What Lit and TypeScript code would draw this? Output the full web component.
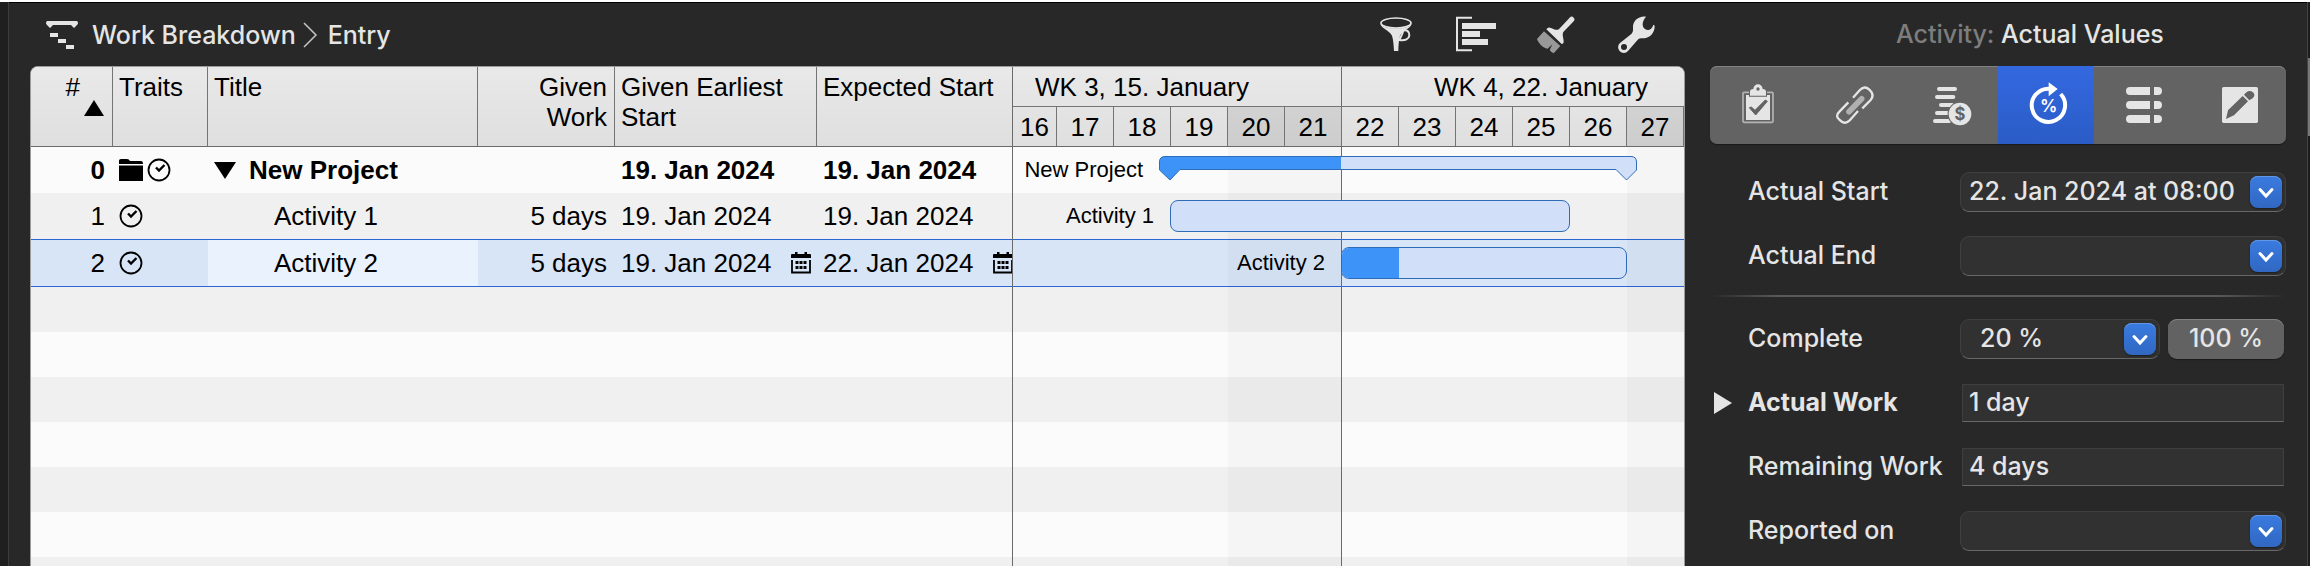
import { LitElement, html, svg, css, nothing } from "lit";
import { customElement } from "lit/decorators.js";
import { classMap } from "lit/directives/class-map.js";

const DAY = 57;
const FIRST_DAY = 16;
const CLIPPED = 14;
const dayX = (day: number) => (day - FIRST_DAY) * DAY - CLIPPED;

interface Row {
  id: number;
  title: string;
  group?: boolean;
  selected?: boolean;
  work: string;
  earliest: string;
  expected: string;
}

const rows: Row[] = [
  { id: 0, title: "New Project", group: true, work: "", earliest: "19. Jan 2024", expected: "19. Jan 2024" },
  { id: 1, title: "Activity 1", work: "5 days", earliest: "19. Jan 2024", expected: "19. Jan 2024" },
  { id: 2, title: "Activity 2", selected: true, work: "5 days", earliest: "19. Jan 2024", expected: "22. Jan 2024" },
];

const days = [16, 17, 18, 19, 20, 21, 22, 23, 24, 25, 26, 27];
const weekend = new Set([20, 21, 27]);

const toolIcons = [
  {
    name: "Filter",
    art: svg`<ellipse cx="60" cy="24" rx="45" ry="15" fill="none" stroke="currentColor" stroke-width="5"/>
      <path d="M13 27C16 40 40 46 48 62C52 74 53 90 54 108H67C67 90 69 74 72 62C80 46 104 40 107 27C98 38 80 40 60 40S22 38 13 27Z" fill="currentColor"/>
      <path d="M82 47C92 43 101 50 100 61S88 78 70 75L78 58Z" fill="none" stroke="currentColor" stroke-width="6"/>`,
  },
  {
    name: "Outline",
    art: svg`<path d="M48 8.500H3V105.500H48" fill="none" stroke="currentColor" stroke-width="6"/>
      <path d="M18 24h102v18H18zM18 48h54v18H18zM18 72h78v18H18z" fill="currentColor"/>`,
  },
  {
    name: "Format",
    art: svg`<path d="M101 8a8 8 0 0 1 12 11L84 49C76 57 83 68 83 80Q83 87 77 87L31 43Q36 36 42 38C52 41 62 49 70 41Z" fill="currentColor"/>
      <path d="M24 49 3 72C8 86 20 98 35 101L49 88 41 105Q46 113 53 115L73 93Z" fill="#999"/>`,
  },
  {
    name: "Tools",
    art: svg`<path fill-rule="evenodd" d="M90 5C68 2 49 18 51 40C52 48 50 53 46 57L12 84A17 17 0 1 0 36 108L64 76C67 72 71 69 77 70C99 71 117 55 116 32L112 29C107 46 95 48 86 41C77 33 78 20 90 5ZM24 87a9 9 0 1 1 0 18a9 9 0 0 1 0-18Z" fill="currentColor"/>`,
  },
];

const tabs = [
  {
    name: "Plan",
    art: svg`<rect x="27" y="34" width="90" height="90" rx="3" fill="none" stroke="#b4b4b4" stroke-width="5"/>
      <path d="M36 42h72v75H36z" fill="currentColor"/>
      <path d="M48 44V32q0-7 10-8a14 14 0 0 1 28 0q10 1 10 8v12z" fill="currentColor" stroke="#636363" stroke-width="6" paint-order="stroke"/>
      <circle cx="72" cy="24" r="5" fill="#636363"/>
      <path d="M46 80 65 102 100 61 94 57 63 88 52 78Z" fill="#636363" stroke="#636363" stroke-width="3"/>`,
  },
  {
    name: "Dependencies",
    art: svg`<path d="M57 92 95 53" stroke="#b0b0b0" stroke-width="17" stroke-linecap="round"/>
      <path d="M69 50 89 28Q103 12 118 26Q135 42 122 57L97 82M55 64 29 91Q14 105 28 116Q44 133 58 119L84 90" fill="none" stroke="currentColor" stroke-width="7"/>`,
  },
  {
    name: "Finances",
    art: svg`<path d="M39 24H87M33 48H82M45 72H78M33 96H66M27 120H70" stroke="currentColor" stroke-width="12" stroke-linecap="round"/>
      <circle cx="102" cy="99" r="34" fill="currentColor" stroke="#636363" stroke-width="6" paint-order="stroke"/>
      <text x="102" y="117" text-anchor="middle" font-size="50" font-weight="700" fill="#636363">$</text>`,
  },
  {
    name: "Actual Values",
    active: true,
    art: svg`<path d="M116 39A50 50 0 1 1 82 23" fill="none" stroke="currentColor" stroke-width="12"/>
      <path d="M80 4V46L107 24Z" fill="currentColor"/>
      <text x="80" y="92" text-anchor="middle" font-size="52" font-weight="600" fill="currentColor">%</text>`,
  },
  {
    name: "Fields",
    art: svg`${[18, 60, 102].map(
      (y) => svg`<path d="M36 ${y}H96v24H36a12 12 0 0 1 0-24ZM108 ${y}h12a12 12 0 0 1 0 24h-12Z" fill="currentColor"/>`
    )}`,
  },
  {
    name: "Notes",
    art: svg`<rect x="24" y="18" width="108" height="108" rx="5" fill="currentColor"/>
      <path d="M36 114 42 88 86 45 102 61 60 103ZM90 41 98 33Q108 26 117 34T116 52L106 58Z" fill="#636363"/>`,
  },
];

const clock = html`<svg class="trait" viewBox="0 0 24 24" aria-label="Scheduled">
  <circle cx="12" cy="12" r="10.500" fill="none" stroke="#000" stroke-width="1.800"/>
  <path d="M9 9.500 12 12.500 17.500 7" fill="none" stroke="#000" stroke-width="2.400"/>
</svg>`;

const folder = html`<svg class="trait" viewBox="0 0 24 24" aria-label="Group">
  <path d="M0 7.500H24V23H0ZM0 2.500Q0 1 2 1H8Q10 1 11 3H22Q24 3 24 6H0Z"/>
</svg>`;

const calendar = html`<svg class="calendar" viewBox="0 0 20 22" aria-label="Calendar">
  <path d="M1 8V20.500H19V8" fill="none" stroke="#000" stroke-width="1.800"/>
  <path d="M0 3Q0 2 1 2H4V0H6.500V2H13.500V0H16V2H19Q20 2 20 3V6H0ZM4.500 9h3v3h-3zM8.500 9h3v3h-3zM12.500 9h3v3h-3zM4.500 14h3v3h-3zM8.500 14h3v3h-3zM12.500 14h3v3h-3z"/>
</svg>`;

@customElement("work-toolbar")
export class WorkToolbar extends LitElement {
  static styles = css`
    :host { display: flex; align-items: center; height: 63px; padding: 0 29px 0 16px; box-sizing: border-box; }
    .mark { width: 32px; height: 30px; margin-right: 14px; }
    .crumbs { display: flex; align-items: center; flex: 1; color: #e5e5e5; }
    .crumb { color: inherit; text-decoration: none; }
    .sep { width: 16px; height: 28px; margin: 0 10px 0 6px; }
    .tools { display: flex; gap: 40px; }
    .tool { width: 40px; height: 40px; padding: 0; border: 0; background: none; color: #e5e5e5; }
    .tool svg { display: block; width: 40px; height: 40px; overflow: visible; }
  `;

  render() {
    return html`
      <nav class="crumbs" aria-label="Location">
        <svg class="mark" viewBox="0 0 32 30" fill="#e5e5e5" aria-hidden="true">
          <path d="M1 1H31Q33 3 31 5L28 8 25 5H7L4 8 1 5Q-1 3 1 1ZM4 13h8v4H4zM12 19h8v4h-8zM20 25h8v4h-8z"/>
        </svg>
        <a class="crumb" href="#work">Work Breakdown</a>
        <svg class="sep" viewBox="0 0 16 28" aria-hidden="true">
          <path d="M2 2 14 14 2 26" fill="none" stroke="#c4c4c4" stroke-width="1.500"/>
        </svg>
        <a class="crumb" href="#entry">Entry</a>
      </nav>
      <div class="tools">
        ${toolIcons.map(
          (t) => html`<button class="tool" aria-label=${t.name}><svg viewBox="0 0 120 120">${t.art}</svg></button>`
        )}
      </div>
    `;
  }
}

@customElement("outline-table")
export class OutlineTable extends LitElement {
  static styles = css`
    :host {
      display: block; flex: none; box-sizing: border-box; border-right: 1px solid #6a6a6a;
      background: linear-gradient(#f0f0f0 50%, #fbfbfb 50%) 0 220px / 100% 90px;
    }
    .outline { border-collapse: separate; border-spacing: 0; table-layout: fixed; width: 981px; }
    .num { width: 82px; } .traits { width: 95px; } .title { width: 270px; }
    .work { width: 137px; } .earliest { width: 202px; } .expected { width: 195px; }
    th {
      height: 80px; padding: 5px 7px 0 6px; box-sizing: border-box; vertical-align: top; text-align: left;
      font-weight: 400; line-height: 30px; border-right: 1px solid #747474; border-bottom: 1px solid #6a6a6a;
      background: linear-gradient(#e9e9e9, #dfdfdf);
    }
    th:last-child { border-right: 0; }
    .head-num { padding-right: 8px; text-align: right; }
    .hash { display: block; margin-right: 24px; }
    .sort { display: block; width: 20px; height: 16px; margin: -2px 0 0 auto; }
    td { height: 46px; padding: 0 8px 0 6px; box-sizing: border-box; line-height: 30px; white-space: nowrap; overflow: hidden; background: #fbfbfb; }
    .odd td { background: #f0f0f0; }
    .group td { font-weight: 700; }
    .selected td { height: 48px; background: #d8e5f6; border-top: 1px solid #2b66d4; border-bottom: 1px solid #2b66d4; }
    .selected .name { background: #eaf2fd; }
    .right { text-align: right; }
    .icons { display: flex; gap: 4px; }
    .trait { width: 24px; height: 24px; }
    .label { display: flex; align-items: center; gap: 13px; padding-left: 60px; }
    .group .label { padding-left: 0; }
    .toggle { width: 22px; height: 18px; padding: 0; border: 0; background: none; }
    .toggle svg { display: block; }
    .date { display: flex; align-items: center; gap: 20px; }
    .calendar { flex: none; width: 20px; height: 22px; }
  `;

  render() {
    return html`
      <table class="outline">
        <colgroup>
          <col class="num"><col class="traits"><col class="title"><col class="work"><col class="earliest"><col class="expected">
        </colgroup>
        <thead>
          <tr>
            <th class="head-num"><span class="hash">#</span>
              <svg class="sort" viewBox="0 0 20 16" aria-hidden="true"><path d="M10 0 20 16H0Z"/></svg></th>
            <th>Traits</th>
            <th>Title</th>
            <th class="right">Given<br>Work</th>
            <th>Given Earliest Start</th>
            <th>Expected Start</th>
          </tr>
        </thead>
        <tbody>
          ${rows.map(
            (r) => html`<tr class=${classMap({ group: !!r.group, odd: r.id % 2 === 1, selected: !!r.selected })}>
              <td class="right">${r.id}</td>
              <td><div class="icons">${r.group ? folder : nothing}${clock}</div></td>
              <td class="name"><div class="label">
                ${r.group
                  ? html`<button class="toggle" aria-label="Collapse"><svg width="22" height="18" viewBox="0 0 22 18"><path d="M0 1H22L11 18Z"/></svg></button>`
                  : nothing}<span>${r.title}</span></div></td>
              <td class="right">${r.work}</td>
              <td><div class="date">${r.earliest}${r.selected ? calendar : nothing}</div></td>
              <td><div class="date">${r.expected}${r.selected ? calendar : nothing}</div></td>
            </tr>`
          )}
        </tbody>
      </table>
    `;
  }
}

@customElement("gantt-chart")
export class GanttChart extends LitElement {
  static styles = css`
    :host {
      display: flex; flex-direction: column; flex: 1; min-width: 0; overflow: hidden; font-size: 22px;
      background: linear-gradient(#f0f0f0 50%, #fbfbfb 50%) 0 220px / 100% 90px;
    }
    .scale { height: 80px; box-sizing: border-box; font-size: 26px; overflow: hidden; background: linear-gradient(#e9e9e9, #dfdfdf); border-bottom: 1px solid #6a6a6a; }
    .weeks { display: flex; height: 40px; box-sizing: border-box; margin-left: -70px; border-bottom: 1px solid #747474; }
    .week { flex: none; width: 399px; box-sizing: border-box; border-right: 1px solid #6a6a6a; padding-top: 5px; line-height: 30px; text-align: center; }
    .days { display: flex; height: 39px; }
    .day { flex: none; width: 57px; box-sizing: border-box; border-right: 1px solid #747474; line-height: 40px; text-align: center; }
    .day:first-child { width: 44px; }
    .off { background: rgba(0, 0, 0, 0.08); }
    .body { position: relative; flex: 1; }
    .band { height: 46px; background: #fbfbfb; }
    .band.odd { background: #f0f0f0; }
    .band.selected { height: 48px; box-sizing: border-box; background: #d8e5f6; border: solid #2b66d4; border-width: 1px 0; }
    .columns { position: absolute; inset: 0; display: flex; }
    .column { flex: none; width: 57px; box-sizing: border-box; }
    .column:first-child { width: 44px; }
    .column.off { background: rgba(0, 0, 0, 0.024); }
    .column.last { border-right: 1px solid #6a6a6a; }
    .item { position: absolute; height: 32px; box-sizing: border-box; }
    .bar { border: 1px solid #2f6cb8; border-radius: 8px; background: #d1dff9; overflow: hidden; height: 100%; box-sizing: border-box; }
    .done { height: 100%; background: #3d93f8; }
    .label { position: absolute; right: 100%; top: 0; padding-right: 16px; line-height: 32px; white-space: nowrap; }
    .group .label { line-height: 28px; }
    .summary { display: block; overflow: visible; }
  `;

  private bar(label: string, from: number, to: number, top: number, done: number) {
    return html`<div class="item" style="left:${dayX(from)}px;width:${(to - from) * DAY + 1}px;top:${top}px">
      <span class="label">${label}</span>
      <div class="bar"><div class="done" style="width:${done}%"></div></div>
    </div>`;
  }

  render() {
    return html`
      <div class="scale">
        <div class="weeks"><div class="week">WK 3, 15. January</div><div class="week">WK 4, 22. January</div></div>
        <div class="days">${days.map((d) => html`<div class=${classMap({ day: true, off: weekend.has(d) })}>${d}</div>`)}</div>
      </div>
      <div class="body">
        ${rows.map((r) => html`<div class=${classMap({ band: true, odd: r.id % 2 === 1, selected: !!r.selected })}></div>`)}
        <div class="columns">
          ${days.map((d) => html`<div class=${classMap({ column: true, off: weekend.has(d), last: d === 21 })}></div>`)}
        </div>
        <div class="item group" style="left:${dayX(19) - 11}px;width:${8 * DAY + 22}px;top:9px">
          <span class="label">New Project</span>
          <svg class="summary" width="478" height="25" viewBox="0 0 478 25">
            <defs><linearGradient id="progress" gradientUnits="userSpaceOnUse" x1="0" x2="478" y1="0" y2="0">
              <stop offset="38.100%" stop-color="#3d93f8"/><stop offset="38.100%" stop-color="#d1dff9"/>
            </linearGradient></defs>
            <path d="M6 .5H472Q477.500 .5 477.500 6V14L467.500 24 457 13.500H21L11 24 .5 14V6Q.5 .5 6 .5Z" fill="url(#progress)" stroke="#2f6cb8"/>
          </svg>
        </div>
        ${this.bar("Activity 1", 19, 26, 53, 0)}
        ${this.bar("Activity 2", 22, 27, 100, 20)}
      </div>
    `;
  }
}

@customElement("value-inspector")
export class ValueInspector extends LitElement {
  static styles = css`
    :host { display: block; width: 576px; flex: none; color: #e5e5e5; }
    .heading { height: 63px; margin: 0; padding-left: 186px; font-size: inherit; font-weight: inherit; line-height: 63px; white-space: nowrap; }
    .kind { color: #7d7d7d; }
    .tabs { display: flex; height: 78px; border-radius: 7px; overflow: hidden; background: #636363; box-shadow: inset 0 1px #828282, 0 1px 1px #1a1a1a; }
    .tab { flex: 1; display: grid; place-items: center; padding: 0; border: 0; background: none; color: #e5e5e5; }
    .tab svg { width: 48px; height: 48px; font-family: Inter, sans-serif; }
    .tab.active { background: linear-gradient(#3368e0, #2b5cc6); color: #fff; }
    .form { padding-top: 28px; }
    .section { display: grid; gap: 24px; }
    .row { display: grid; grid-template-columns: 38px 212px 1fr; align-items: center; height: 40px; }
    .name { grid-column: 2; padding-bottom: 2px; white-space: nowrap; }
    .name.strong { font-weight: 700; }
    .disclose { justify-self: start; width: 18px; height: 22px; margin-left: 4px; padding: 0; border: 0; background: none; }
    .disclose svg { display: block; }
    .combo, .plain {
      box-sizing: border-box; background: #313131; border: 1px solid #3f3f3f; border-bottom-color: #686868;
    }
    .combo { display: flex; align-items: center; flex: 1; height: 40px; padding: 0 3px 0 8px; border-radius: 9px; }
    .combo.wide { padding-left: 19px; }
    .plain { height: 38px; margin: 0 2px; padding: 0 6px 2px; border-radius: 0; }
    .input, .plain { min-width: 0; font: inherit; color: inherit; outline: 0; }
    .input { flex: 1; width: 100%; padding: 0 0 2px; border: 0; background: none; }
    .drop { flex: none; width: 32px; height: 32px; padding: 0; border: 0; border-radius: 8px; background: linear-gradient(#3a7be0, #3067c2); box-shadow: inset 0 1px #6296e6, 0 1px 2px #1c1c1c; }
    .drop svg { display: block; }
    .split { display: flex; gap: 8px; padding-right: 2px; }
    .full { width: 116px; height: 40px; padding: 0 0 2px; border: 0; border-radius: 9px; background: #626262; color: inherit; font: inherit; box-shadow: inset 0 1px #808080, 0 1px 1px #1a1a1a; }
    .rule { height: 2px; margin: 19px 0 22px; border: 0; background: linear-gradient(90deg, transparent, #5a5a5a 12%, #5a5a5a 88%, transparent); }
  `;

  private combo(id: string, value: string, wide = false) {
    return html`<div class=${classMap({ combo: true, wide })}>
      <input class="input" id=${id} type="text" .value=${value}>
      <button class="drop" type="button" aria-label="Choose a value">
        <svg width="32" height="32" viewBox="0 0 32 32"><path d="M10 13.500 16 20 22 13.500" fill="none" stroke="#fff" stroke-width="3" stroke-linecap="round"/></svg>
      </button>
    </div>`;
  }

  render() {
    return html`
      <h2 class="heading"><span class="kind">Activity:</span> Actual Values</h2>
      <div class="tabs" role="tablist">
        ${tabs.map(
          (t) => html`<button class=${classMap({ tab: true, active: !!t.active })} role="tab" aria-selected=${t.active ? "true" : "false"} aria-label=${t.name}>
            <svg viewBox="0 0 144 144">${t.art}</svg></button>`
        )}
      </div>
      <form class="form">
        <div class="section">
          <div class="row"><label class="name" for="start">Actual Start</label>${this.combo("start", "22. Jan 2024 at 08:00")}</div>
          <div class="row"><label class="name" for="end">Actual End</label>${this.combo("end", "")}</div>
        </div>
        <hr class="rule">
        <div class="section">
          <div class="row"><label class="name" for="complete">Complete</label>
            <div class="split">${this.combo("complete", "20 %", true)}<button class="full" type="button">100 %</button></div></div>
          <div class="row">
            <button class="disclose" type="button" aria-label="Expand"><svg width="18" height="22" viewBox="0 0 18 22"><path d="M0 0 18 11 0 22Z" fill="#e5e5e5"/></svg></button>
            <label class="name strong" for="work">Actual Work</label><input class="plain" id="work" type="text" .value=${"1 day"}></div>
          <div class="row"><label class="name" for="remaining">Remaining Work</label><input class="plain" id="remaining" type="text" .value=${"4 days"}></div>
          <div class="row"><label class="name" for="reported">Reported on</label>${this.combo("reported", "")}</div>
        </div>
      </form>
    `;
  }
}

@customElement("app-root")
export class AppRoot extends LitElement {
  static styles = css`
    :host {
      display: flex; height: 100vh; box-sizing: border-box; overflow: hidden; border-top: 2px solid #fff;
      background: #282828; font: 500 25px/30px Inter, "Liberation Sans", sans-serif;
    }
    .rail { flex: none; width: 8px; background: #1f1f1f; border-right: 1px solid #3c3c3c; }
    .window { flex: 1; display: flex; gap: 25px; min-width: 0; padding: 0 21px; border-top: 1px solid #000; }
    .main { flex: 1; display: flex; flex-direction: column; min-width: 0; }
    .sheet {
      flex: 1; display: flex; min-height: 0; overflow: hidden; box-sizing: border-box;
      border: 1px solid #9b9b9b; border-bottom: 0; border-radius: 8px 8px 0 0; background: #f0f0f0;
      color: #000; font-family: "Liberation Sans", Arial, sans-serif; font-size: 26px; font-weight: 400;
    }
    .edge { flex: none; width: 2px; border-left: 1px solid #444; background: linear-gradient(#1c1c1c 56px, #777 56px 134px, #1c1c1c 134px); }
  `;

  render() {
    return html`
      <div class="rail"></div>
      <div class="window">
        <main class="main">
          <work-toolbar></work-toolbar>
          <div class="sheet"><outline-table></outline-table><gantt-chart></gantt-chart></div>
        </main>
        <value-inspector></value-inspector>
      </div>
      <div class="edge"></div>
    `;
  }
}
